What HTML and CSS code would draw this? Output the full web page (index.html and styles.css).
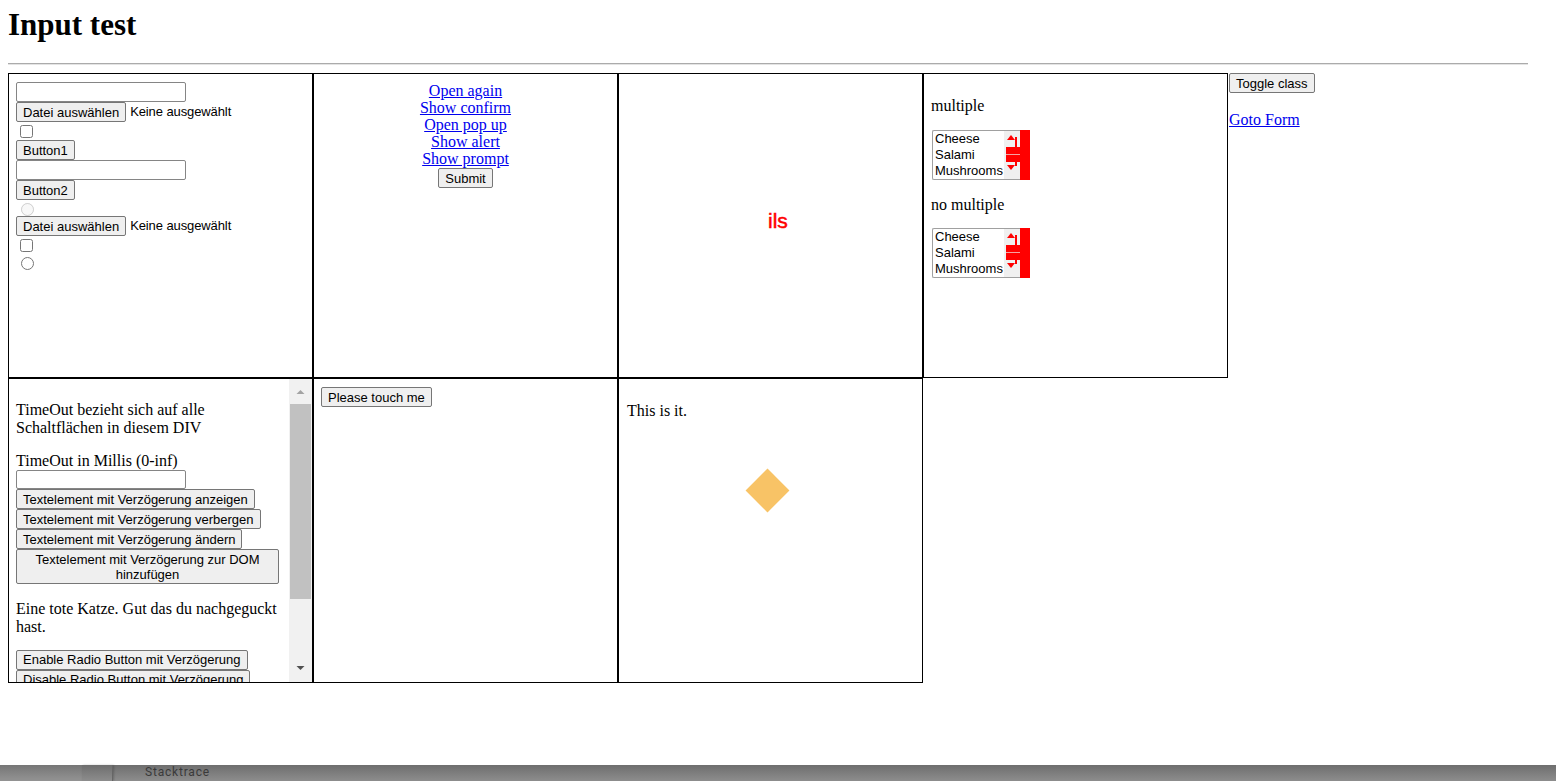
FILE: index.html
```html
<!DOCTYPE html>
<html lang="de">
<head>
<meta charset="utf-8">
<title>Input test</title>
<link rel="stylesheet" href="styles.css">
</head>
<body>
<div class="page">
  <h1 class="title">Input test</h1>
  <hr class="rule">
  <div class="board">
    <div class="cell cell-controls">
      <input class="txt txt-first" type="text">
      <div class="file"><button class="btn file-btn">Datei auswählen</button><span class="file-label">Keine ausgewählt</span></div>
      <input class="chk" type="checkbox">
      <button class="btn">Button1</button>
      <input class="txt" type="text">
      <button class="btn">Button2</button>
      <input class="rad" type="radio" disabled>
      <div class="file"><button class="btn file-btn">Datei auswählen</button><span class="file-label">Keine ausgewählt</span></div>
      <input class="chk" type="checkbox">
      <input class="rad" type="radio">
    </div>

    <div class="cell cell-links">
      <a class="lnk" href="#">Open again</a>
      <a class="lnk" href="#">Show confirm</a>
      <a class="lnk" href="#">Open pop up</a>
      <a class="lnk" href="#">Show alert</a>
      <a class="lnk" href="#">Show prompt</a>
      <button class="btn btn-submit">Submit</button>
    </div>

    <div class="cell cell-anim">
      <div class="anim-text">ils</div>
    </div>

    <div class="cell cell-selects">
      <p class="para">multiple</p>
      <div class="listbox">
        <div class="listbox-opts">
          <div class="opt">Cheese</div>
          <div class="opt">Salami</div>
          <div class="opt">Mushrooms</div>
        </div>
        <svg class="listbox-bar" width="26" height="50" viewBox="0 0 26 50">
          <rect x="0" y="0" width="16" height="50" fill="#a0a0a0"/>
          <rect x="0" y="1" width="16" height="48" fill="#f0f0f0"/>
          <rect x="16" y="0" width="10" height="50" fill="#ff0000"/>
          <polygon points="3,10 7,5 11,10" fill="#ff0000"/>
          <rect x="11" y="7" width="2" height="10" fill="#ff0000"/>
          <rect x="2" y="17" width="14" height="15" fill="#ff0000"/>
          <rect x="2" y="24" width="14" height="1" fill="#f4a3a3"/>
          <rect x="11" y="32" width="2" height="4" fill="#ff0000"/>
          <polygon points="3,35 11,35 7,40" fill="#ff0000"/>
        </svg>
      </div>
      <p class="para">no multiple</p>
      <div class="listbox">
        <div class="listbox-opts">
          <div class="opt">Cheese</div>
          <div class="opt">Salami</div>
          <div class="opt">Mushrooms</div>
        </div>
        <svg class="listbox-bar" width="26" height="50" viewBox="0 0 26 50">
          <rect x="0" y="0" width="16" height="50" fill="#a0a0a0"/>
          <rect x="0" y="1" width="16" height="48" fill="#f0f0f0"/>
          <rect x="16" y="0" width="10" height="50" fill="#ff0000"/>
          <polygon points="3,10 7,5 11,10" fill="#ff0000"/>
          <rect x="11" y="7" width="2" height="10" fill="#ff0000"/>
          <rect x="2" y="17" width="14" height="15" fill="#ff0000"/>
          <rect x="2" y="24" width="14" height="1" fill="#f4a3a3"/>
          <rect x="11" y="32" width="2" height="4" fill="#ff0000"/>
          <polygon points="3,35 11,35 7,40" fill="#ff0000"/>
        </svg>
      </div>
    </div>

    <div class="side">
      <button class="btn">Toggle class</button>
      <p class="goto"><a href="#">Goto Form</a></p>
    </div>

    <div class="cell cell-scroll">
      <div class="scroll-body">
        <p class="scroll-intro">TimeOut bezieht sich auf alle Schaltflächen in diesem DIV</p>
        <div class="scroll-label">TimeOut in Millis (0-inf)</div>
        <input class="txt" type="text">
        <button class="btn">Textelement mit Verzögerung anzeigen</button>
        <button class="btn">Textelement mit Verzögerung verbergen</button>
        <button class="btn">Textelement mit Verzögerung ändern</button>
        <button class="btn">Textelement mit Verzögerung zur DOM hinzufügen</button>
        <p class="scroll-cat">Eine tote Katze. Gut das du nachgeguckt hast.</p>
        <button class="btn">Enable Radio Button mit Verzögerung</button>
        <button class="btn">Disable Radio Button mit Verzögerung</button>
      </div>
      <svg class="scroll-bar" width="23" height="303" viewBox="0 0 23 303">
        <rect x="0" y="0" width="23" height="303" fill="#f1f1f1"/>
        <polygon points="7.5,15 11.5,11 15.5,15" fill="#a3a3a3"/>
        <rect x="1" y="25" width="21" height="195" fill="#c1c1c1"/>
        <polygon points="7.5,287 15.5,287 11.5,291" fill="#505050"/>
      </svg>
    </div>

    <div class="cell cell-touch">
      <button class="btn">Please touch me</button>
    </div>

    <div class="cell cell-diamond">
      <p class="para para-it">This is it.</p>
      <div class="diamond"></div>
    </div>
  </div>
</div>

<div class="devbar">
  <div class="devbar-a"></div>
  <div class="devbar-b"></div>
  <div class="devbar-title">Stacktrace</div>
</div>
</body>
</html>
```

FILE: styles.css
```css
* {
  box-sizing: border-box;
}

html,
body {
  margin: 0;
  padding: 0;
  background: #fff;
}

body {
  font-family: "Liberation Serif", "Times New Roman", serif;
  font-size: 16px;
  line-height: 1.107;
  color: #000;
}

a {
  color: #0000ee;
  text-decoration: underline;
}

.page {
  width: 1520px;
  margin: 0 8px;
}

.title {
  font-size: 31px;
  font-weight: bold;
  line-height: 37px;
  margin: 6px 0 20px;
}

.rule {
  display: block;
  margin: 0 0 8px;
  height: 2px;
  border: 0;
  border-top: 1px solid #ababab;
  border-bottom: 1px solid #e4e4e4;
}

/* grid of test cells */
.board {
  display: grid;
  grid-template-columns: repeat(4, 305px) auto;
  grid-template-rows: 305px 305px;
}

.cell {
  border: 1px solid #000;
  padding: 7px;
  overflow: hidden;
}

/* form controls */
.btn {
  font-family: "Liberation Sans", Arial, sans-serif;
  font-size: 13px;
  line-height: 15px;
  padding: 1.5px 6px;
  margin: 0;
  border: 1px solid #767676;
  border-radius: 2px;
  background: #efefef;
  color: #000;
  text-align: center;
}

.txt {
  display: block;
  width: 170px;
  height: 20px;
  margin: 0;
  padding: 1px 2px;
  border: 1px solid #858585;
  border-radius: 2px;
  background: #fff;
  font-family: "Liberation Sans", Arial, sans-serif;
  font-size: 13px;
}

.chk {
  width: 13px;
  height: 13px;
  margin: 3px 3px 2px 4px;
}

.rad {
  width: 13px;
  height: 13px;
  margin: 3px 3px 0 5px;
}

/* cell 1 */
.cell-controls {
  display: flex;
  flex-direction: column;
  align-items: flex-start;
}

.txt-first {
  margin-top: 1px;
}

.file {
  display: flex;
  align-items: center;
  font-family: "Liberation Sans", Arial, sans-serif;
  font-size: 13px;
  letter-spacing: -0.1px;
}

.file-btn {
  margin-right: 4px;
  letter-spacing: 0;
}

.file-label {
  color: #000;
}

/* cell 2 */
.cell-links {
  display: flex;
  flex-direction: column;
  align-items: center;
  padding-top: 8px;
}

.lnk {
  display: block;
  line-height: 17px;
}

.btn-submit {
  margin-top: 1px;
}

/* cell 3 */
.anim-text {
  margin: 128px 0 0 142px;
  font-family: "Liberation Sans", Arial, sans-serif;
  font-size: 21px;
  color: #ff0000;
  -webkit-text-stroke: 0.5px #ff0000;
}

/* cell 4 */
.para {
  margin: 16px 0;
}

.cell-selects .para {
  margin: 16px 0 15px;
}

.listbox {
  display: flex;
  width: 98px;
  height: 50px;
  margin-left: 1px;
  border: 1px solid #a0a0a0;
  border-right: 0;
  border-radius: 2px 0 0 2px;
  background: #fff;
}

.listbox-opts {
  flex: 1;
  padding-left: 2px;
  font-family: "Liberation Sans", Arial, sans-serif;
  font-size: 13px;
  line-height: 16px;
  overflow: hidden;
}

.opt {
  white-space: nowrap;
}

.listbox-bar {
  display: block;
  flex: none;
  margin: -1px 0;
}

/* side column */
.side {
  padding-left: 1px;
}

.goto {
  margin: 18px 0 16px;
}

/* cell 5: scrolling area */
.cell-scroll {
  display: flex;
  padding: 0;
}

.scroll-body {
  flex: 1;
  min-width: 0;
  padding: 8px 10px 0 7px;
  display: flex;
  flex-direction: column;
  align-items: flex-start;
  overflow: hidden;
}

.scroll-body .btn {
  flex: none;
}

.scroll-intro {
  margin: 14px 0 0;
}

.scroll-label {
  margin-top: 16px;
}

.scroll-cat {
  margin: 16px 0 14px;
}

.scroll-bar {
  display: block;
  flex: none;
}

/* cell 6 */
.cell-touch {
  padding-top: 8px;
}

/* cell 7 */
.para-it {
  padding-left: 1px;
}

.diamond {
  width: 31px;
  height: 31px;
  margin: 55px 0 0 126px;
  background: #f8c366;
  transform: rotate(45deg);
}

/* bottom tool panel peeking in */
.devbar {
  position: fixed;
  left: 0;
  right: 0;
  bottom: 0;
  height: 16px;
  display: flex;
  background: linear-gradient(#6e6e6e, #8d8d8d);
}

.devbar-a {
  width: 82px;
  flex: none;
  background: rgba(255, 255, 255, 0.06);
}

.devbar-b {
  width: 31px;
  flex: none;
  border-right: 1px solid #666;
  box-shadow: 1px 0 2px rgba(0, 0, 0, 0.2);
}

.devbar-title {
  padding-left: 32px;
  font-family: Roboto, "Liberation Sans", sans-serif;
  font-size: 12px;
  letter-spacing: 0.8px;
  line-height: 14px;
  color: #3a3a3a;
}
```
